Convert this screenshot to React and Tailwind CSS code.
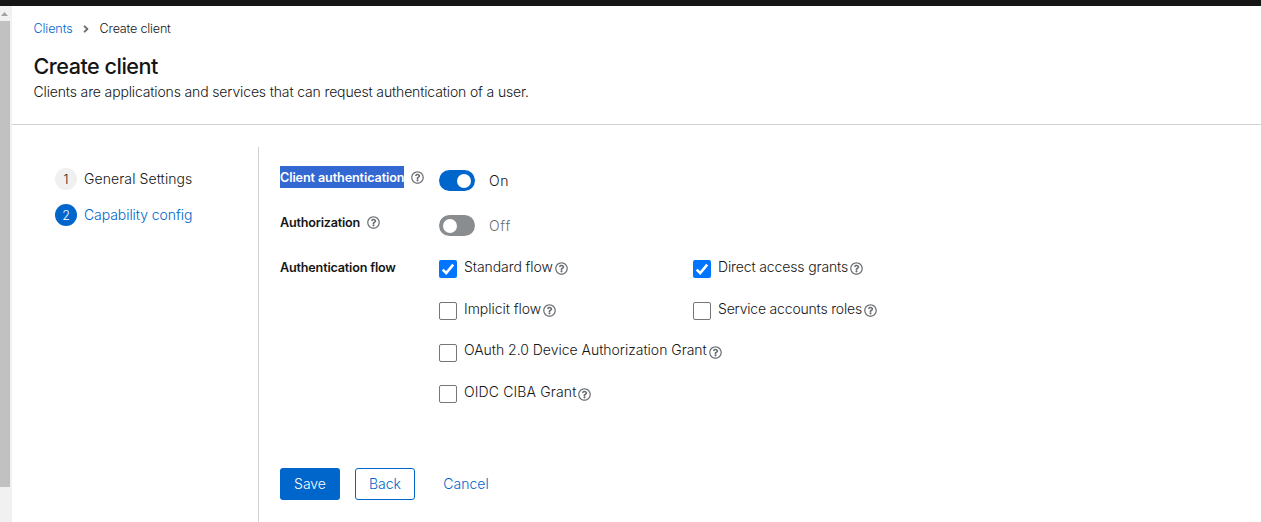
import React from "react";
import { FaRegQuestionCircle, FaAngleRight } from "react-icons/fa";

function Help({ className = "" }) {
  return <FaRegQuestionCircle className={`size-[13px] shrink-0 text-[#6a6e73] ${className}`} />;
}

function Step({ number, label, active, tracking }) {
  return (
    <li className="flex h-[22px] items-center">
      <span
        className={`flex size-[22px] items-center justify-center rounded-full pt-px text-[12.6px] ${
          active ? "bg-[#0066cc] text-white" : "bg-[#f0f0f0] text-[#151515]"
        }`}
      >
        {number}
      </span>
      <span className={`ml-[7px] ${tracking} ${active ? "text-[#0066cc]" : "text-[#151515]"}`}>{label}</span>
    </li>
  );
}

function Toggle({ on }) {
  return (
    <div className="flex items-center">
      <div
        className={`flex h-[21px] w-9 items-center rounded-full px-[4px] ${
          on ? "justify-end bg-[#0066cc]" : "justify-start bg-[#8a8d90]"
        }`}
      >
        <span className="size-[14px] rounded-full bg-white" />
      </div>
      <span className={`ml-[14px] pt-px tracking-[0.7px] ${on ? "text-[#151515]" : "text-[#6a6e73]"}`}>
        {on ? "On" : "Off"}
      </span>
    </div>
  );
}

function FieldLabel({ children, tracking, selected, help = true }) {
  return (
    <div className="flex h-[22px] w-[159px] items-center text-[12.6px] font-semibold">
      <span className={`h-[22px] pt-px leading-[21px] ${tracking} ${selected ? "bg-[#3367d1] text-white" : ""}`}>
        {children}
      </span>
      {help && <Help className="ml-[7px]" />}
    </div>
  );
}

function Checkbox({ checked, className }) {
  return (
    <span
      role="checkbox"
      aria-checked={!!checked}
      className={`block size-[18px] shrink-0 rounded-[2px] ${
        checked ? "bg-[#0075ff]" : "border border-[#767676] bg-white"
      } ${className}`}
    >
      {checked && (
        <svg viewBox="0 0 18 18" className="size-[18px]">
          <path d="M3.7 9.6 7.2 13 14.2 4.6" fill="none" stroke="#fff" strokeWidth="2.6" />
        </svg>
      )}
    </span>
  );
}

function Option({ label, checked, tracking, box = "mt-[3px]", help = "mt-[5px]", className = "" }) {
  return (
    <div className={`flex h-5 items-start ${className}`}>
      <Checkbox checked={checked} className={box} />
      <span className={`ml-[7px] leading-5 whitespace-nowrap ${tracking}`}>{label}</span>
      <Help className={`ml-[2px] ${help}`} />
    </div>
  );
}

export default function App() {
  return (
    <div className="flex h-[522px] w-[1261px] flex-col overflow-hidden bg-white font-['Inter',sans-serif] text-[14px] leading-5 font-[350] text-[#151515]">
      <div className="h-[6px] shrink-0 bg-[#151515]" />
      <div className="flex min-h-0 flex-1">
        <div className="flex w-3 shrink-0 flex-col bg-[#f1f1f1]">
          <svg className="h-[15px] w-[10px] shrink-0" viewBox="0 0 10 15">
            <path d="M1 10 4.5 6 8 10Z" fill="#a3a3a3" />
          </svg>
          <div className="h-[466px] w-[10px] bg-[#c1c1c1]" />
        </div>
        <main className="flex min-w-0 flex-1 flex-col">
          <header className="h-[119px] shrink-0 border-b border-[#d2d2d2] pt-[13px] pl-[21.5px]">
            <nav className="flex h-5 items-center text-[12.6px]">
              <a className="tracking-[-0.12px] text-[#0066cc]">Clients</a>
              <FaAngleRight className="mr-[8px] ml-[7px] size-3 text-[#6a6e73]" />
              <span className="tracking-[-0.2px]">Create client</span>
            </nav>
            <h1 className="mt-[13px] text-[21.6px] leading-7 font-medium tracking-[-0.5px]">Create client</h1>
            <p className="mt-[2px] leading-5 tracking-[-0.145px]">
              Clients are applications and services that can request authentication of a user.
            </p>
          </header>
          <div className="flex flex-1">
            <ol className="mt-[22px] flex w-[247px] shrink-0 flex-col gap-[14px] border-r border-[#d2d2d2] pt-[21px] pl-[43px]">
              <Step number="1" label="General Settings" tracking="tracking-[0.09px]" />
              <Step number="2" label="Capability config" tracking="tracking-[-0.07px]" active />
            </ol>
            <div className="flex flex-col pt-[41px] pl-[21px]">
              <div className="flex h-[45px] items-start">
                <FieldLabel tracking="tracking-[-0.1px]" selected>Client authentication</FieldLabel>
                <div className="mt-1"><Toggle on /></div>
              </div>
              <div className="flex h-[46px] items-start">
                <FieldLabel tracking="tracking-[-0.2px]">Authorization</FieldLabel>
                <div className="mt-1"><Toggle /></div>
              </div>
              <div className="flex">
                <div className="-mt-px">
                  <FieldLabel tracking="tracking-[-0.18px]" help={false}>Authentication flow</FieldLabel>
                </div>
                <div className="grid grid-cols-[254px_300px]">
                  <Option label="Standard flow" tracking="tracking-[-0.08px]" checked />
                  <Option label="Direct access grants" tracking="tracking-[-0.13px]" checked />
                  <Option label="Implicit flow" tracking="tracking-[-0.03px]" className="mt-[22px]" />
                  <Option label="Service accounts roles" tracking="tracking-[-0.19px]" className="mt-[22px]" />
                  <Option
                    label="OAuth 2.0 Device Authorization Grant"
                    tracking="tracking-[-0.02px]"
                    box="mt-[4px]"
                    help="mt-[6px]"
                    className="col-span-2 mt-[21px]"
                  />
                  <Option
                    label="OIDC CIBA Grant"
                    tracking="tracking-[0.14px]"
                    help="mt-[6px]"
                    className="col-span-2 mt-[22px]"
                  />
                </div>
              </div>
              <div className="mt-[66px] flex gap-[15px]">
                <button className="h-8 w-[60px] rounded-[3px] bg-[#0066cc] text-white">Save</button>
                <button className="h-8 w-[60px] rounded-[3px] border border-[#0066cc] text-[#0066cc]">Back</button>
                <button className="h-8 w-[72px] text-[#0066cc]">Cancel</button>
              </div>
            </div>
          </div>
        </main>
      </div>
    </div>
  );
}
